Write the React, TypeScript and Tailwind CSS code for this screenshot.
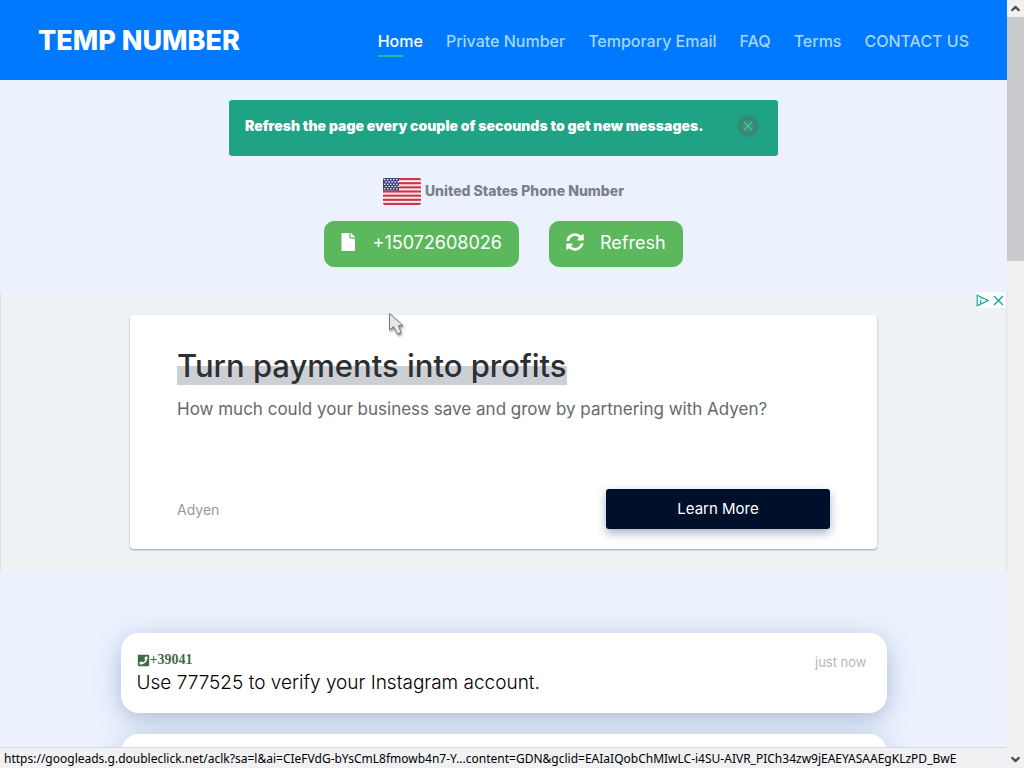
import React from "react"
import { FaFile, FaSyncAlt, FaPhoneSquare } from "react-icons/fa"
import { ChevronDown, ChevronUp } from "lucide-react"

const links = ["Private Number", "Temporary Email", "FAQ", "Terms", "CONTACT US"]

const Header = () => {
  return (
    <header className="flex h-20 items-center justify-between bg-[#0079ff] px-[38px] pt-0.5">
      <a href="#" className="text-[27px] font-extrabold text-white">
        TEMP NUMBER
      </a>
      <nav className="flex items-center gap-[23px] text-[16px] font-medium text-[#a6d5ff]">
        <a href="#" className="relative text-white">
          Home
          <span className="absolute -bottom-1 left-0 h-0.5 w-[25px] bg-[#1cc09f]"></span>
        </a>
        {links.map((link) => (
          <a href="#" key={link}>
            {link}
          </a>
        ))}
      </nav>
    </header>
  )
}

const Flag = () => {
  return (
    <svg width="38" height="27" viewBox="0 0 38 27" aria-hidden="true">
      <defs>
        <clipPath id="flag">
          <rect width="38" height="27" rx="2" />
        </clipPath>
      </defs>
      <g clipPath="url(#flag)">
        <rect width="38" height="27" fill="#fbe9ea" />
        {[0, 1, 2, 3, 4, 5, 6].map((i) => (
          <rect key={i} y={i * 4.15} width="38" height="2.1" fill="#c8364b" />
        ))}
        <rect width="16" height="12.5" fill="#3c4278" />
        {[0, 1, 2, 3, 4].map((row) =>
          [0, 1, 2, 3, 4].map((col) => (
            <circle
              key={`${row}-${col}`}
              cx={1.8 + col * 3 + (row % 2) * 1.3}
              cy={1.6 + row * 2.3}
              r="0.8"
              fill="#ffffff"
            />
          ))
        )}
      </g>
    </svg>
  )
}

const Hero = () => {
  return (
    <section className="flex h-[212px] flex-col items-center pt-5">
      <div className="flex h-14 w-full max-w-[549px] items-start justify-between rounded-[3px] bg-[#20a385] pr-[18px] pl-4">
        <p className="pt-4 text-[14px] leading-5 font-black text-white">
          Refresh the page every couple of secounds to get new messages.
        </p>
        <button aria-label="Close" className="mt-3.5">
          <svg width="24" height="24" viewBox="0 0 24 24" fill="none">
            <circle cx="12" cy="12" r="10" fill="#3f8e7a" stroke="#2f8974" strokeWidth="1.5" />
            <circle cx="12" cy="12" r="7.5" stroke="#2d7f6c" />
            <path d="M8 8l8 8M16 8l-8 8" stroke="#35c9a4" strokeWidth="1.3" />
          </svg>
        </button>
      </div>
      <h1 className="mt-[21px] flex h-7 items-end gap-1 text-[14px] leading-7 font-extrabold text-[#7c8088]">
        <Flag />
        United States Phone Number
      </h1>
      <div className="mt-4 flex gap-[30px] text-[18px] text-white">
        <button className="flex h-[46px] w-[195px] items-center gap-[17px] rounded-[10px] border border-[#5cb85c] bg-[#5cb85c] px-4 pb-1">
          <FaFile size={18} />
          +15072608026
        </button>
        <button className="flex h-[46px] w-[134px] items-center gap-4 rounded-[10px] border border-[#5cb85c] bg-[#5cb85c] px-4 pb-1">
          <FaSyncAlt size={18} />
          Refresh
        </button>
      </div>
    </section>
  )
}

const Advert = () => {
  return (
    <section className="relative flex h-[280px] flex-col items-center border-x border-[#dfe2e6] bg-[#eff2f5] pt-[23px]">
      <div className="absolute top-0 right-0 flex h-4 items-center gap-1 bg-white pr-0.5">
        <svg width="13" height="13" viewBox="0 0 13 13" fill="none" stroke="#0aa5a5" strokeWidth="1.2">
          <path d="M1.2 1.2L12 6.5L1.2 11.8Z" />
          <path d="M4.7 4v0.8M4.7 6v3.5" />
        </svg>
        <button aria-label="Close ad">
          <svg width="11" height="11" viewBox="0 0 11 11" stroke="#0aa5a5" strokeWidth="1.3">
            <path d="M1 1l9 9M10 1l-9 9" />
          </svg>
        </button>
      </div>
      <div className="flex h-[234px] w-full max-w-[747px] flex-col rounded bg-white px-[47px] pt-8 pb-5 shadow-[0_1px_2px_rgba(0,0,0,0.35)]">
        <h2 className="text-[31px] leading-[38px] font-medium text-[#2d2f31]">
          <a href="#" className="inline-block bg-linear-to-b from-transparent from-50% to-[#cccfd5] to-50%">
            Turn payments into profits
          </a>
        </h2>
        <p className="mt-3 text-[17px] leading-6 text-[#66696c]">
          How much could your business save and grow by partnering with Adyen?
        </p>
        <div className="mt-auto flex items-center justify-between">
          <a href="#" className="text-[14px] text-[#97999c]">
            Adyen
          </a>
          <button className="h-10 w-56 rounded-[3px] bg-[#00102a] text-[15px] text-white shadow-[0_4px_10px_rgba(0,30,80,0.35)]">
            Learn More
          </button>
        </div>
      </div>
    </section>
  )
}

const Message = ({ from, text, time }: { from?: string; text?: string; time?: string }) => {
  return (
    <li className="h-20 rounded-[18px] bg-white px-4 pt-[18px] shadow-[0_6px_24px_rgba(60,90,150,0.35)]">
      <div className="flex items-start justify-between">
        <div>
          <p className="flex items-center font-['Liberation_Serif',serif] text-[14px] leading-[18px] font-bold text-[#3f6b49]">
            {from && <FaPhoneSquare size={13} />}
            {from}
          </p>
          <p className="text-[19px] leading-7 font-light text-black">{text}</p>
        </div>
        <time className="pt-0.5 pr-1 text-[13px] text-[#b5b7ba]">{time}</time>
      </div>
    </li>
  )
}

const Scrollbar = () => {
  return (
    <div className="flex w-[17px] shrink-0 flex-col items-center justify-between bg-[#f0f0f0] text-[#505050]">
      <div className="flex w-full flex-col items-center">
        <ChevronUp size={13} strokeWidth={4} className="my-0.5" />
        <div className="h-[244px] w-full bg-[#c9cacb]"></div>
      </div>
      <ChevronDown size={13} strokeWidth={4} className="my-0.5" />
    </div>
  )
}

const App = () => {
  return (
    <div className="relative flex h-screen overflow-hidden bg-[#ebf2fe] font-[Inter,sans-serif]">
      <main className="min-w-0 flex-1 overflow-hidden">
        <Header />
        <Hero />
        <Advert />
        <ul className="mx-auto mt-[61px] flex max-w-[766px] flex-col gap-[21px]">
          <Message from="+39041" text="Use 777525 to verify your Instagram account." time="just now" />
          <Message />
        </ul>
      </main>
      <Scrollbar />
      <div className="absolute right-[18px] bottom-0 left-0 flex h-[21px] items-center border-t border-[#d5d9df] bg-[#f0f1f2] pt-0.5 pl-1 font-['Noto_Sans',sans-serif] text-[12px] whitespace-nowrap text-black">
        https://googleads.g.doubleclick.net/aclk?sa=l&amp;ai=CIeFVdG-bYsCmL8fmowb4n7-Y...content=GDN&amp;gclid=EAIaIQobChMIwLC-i4SU-AIVR_PICh34zw9jEAEYASAAEgKLzPD_BwE
      </div>
      <svg
        className="absolute top-[312px] left-[388px] drop-shadow-[1px_2px_1px_rgba(0,0,0,0.4)]"
        width="18"
        height="25"
        viewBox="0 0 18 25"
      >
        <path d="M1.5 1.5V18L5.5 14.5L9.5 22L13 20.5L10.5 13.5H15Z" fill="#e6e6e8" stroke="#77787a" />
      </svg>
    </div>
  )
}

export default App
